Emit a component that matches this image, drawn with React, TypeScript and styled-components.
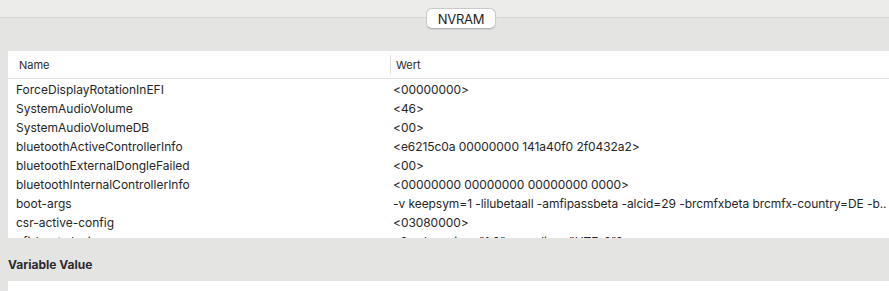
import React from "react";
import styled, { createGlobalStyle } from "styled-components";

const GlobalStyle = createGlobalStyle`
  html, body {
    margin: 0;
    padding: 0;
    background: #e4e4e3;
    overflow: hidden;
  }
  body {
    font-family: Inter, "Liberation Sans", sans-serif;
    color: #262626;
  }
`;

const rows: [string, string][] = [
  ["ForceDisplayRotationInEFI", "<00000000>"],
  ["SystemAudioVolume", "<46>"],
  ["SystemAudioVolumeDB", "<00>"],
  ["bluetoothActiveControllerInfo", "<e6215c0a 00000000 141a40f0 2f0432a2>"],
  ["bluetoothExternalDongleFailed", "<00>"],
  ["bluetoothInternalControllerInfo", "<00000000 00000000 00000000 0000>"],
  [
    "boot-args",
    "-v keepsym=1 -lilubetaall -amfipassbeta -alcid=29 -brcmfxbeta brcmfx-country=DE -b..",
  ],
  ["csr-active-config", "<03080000>"],
  ["efi-boot-device", "<?xml version=\"1.0\" encoding=\"UTF-8\"?><array>"],
];

export default function App() {
  return (
    <Page>
      <GlobalStyle />
      <TopBar />
      <TabStrip>
        <Tab>NVRAM</Tab>
      </TabStrip>
      <TablePanel>
        <HeaderRow>
          <HeaderCell>Name</HeaderCell>
          <HeaderCell divided>Wert</HeaderCell>
        </HeaderRow>
        {rows.map(([name, value]) => (
          <Row key={name}>
            <Cell>{name}</Cell>
            <Cell value>{value}</Cell>
          </Row>
        ))}
      </TablePanel>
      <SectionTitle>Variable Value</SectionTitle>
      <ValueBox />
    </Page>
  );
}

const Page = styled.div`
  height: 291px;
  display: flex;
  flex-direction: column;
`;

const TopBar = styled.div`
  height: 17px;
  background: #ececeb;
  border-bottom: 1px solid #d5d5d4;
  flex-shrink: 0;
`;

const TabStrip = styled.div`
  display: flex;
  justify-content: center;
  margin-top: -10px;
  padding-left: 33px;
`;

const Tab = styled.div`
  width: 68px;
  height: 19px;
  box-sizing: content-box;
  display: flex;
  align-items: center;
  justify-content: center;
  background: #ffffff;
  border: 1px solid #c9c9c9;
  border-bottom-color: #b5b5b5;
  border-radius: 6px;
  font-size: 13px;
  letter-spacing: -0.3px;
  color: #1e1e1e;
  box-shadow: 0 0.5px 1px rgba(0, 0, 0, 0.08);
`;

const TablePanel = styled.div`
  margin: 22px 0 0 8px;
  height: 187px;
  background: #ffffff;
  overflow: hidden;
  flex-shrink: 0;
`;

const HeaderRow = styled.div`
  display: grid;
  grid-template-columns: 382px 1fr;
  height: 27px;
  align-items: center;
  border-bottom: 1px solid #e2e2e2;
  font-size: 11px;
`;

const HeaderCell = styled.div<{ divided?: boolean }>`
  padding-left: ${(p) => (p.divided ? "5px" : "11px")};
  padding-top: 2px;
  border-left: ${(p) => (p.divided ? "1px solid #e0e0e0" : "none")};
  line-height: 17px;
  color: #2a2a2a;
`;

const Row = styled.div`
  display: grid;
  grid-template-columns: 382px 1fr;
  height: 19px;
  align-items: center;
  font-size: 12px;
`;

const Cell = styled.div<{ value?: boolean }>`
  padding-left: ${(p) => (p.value ? "3px" : "8px")};
  padding-top: 1px;
  white-space: nowrap;
  overflow: hidden;
  letter-spacing: ${(p) => (p.value ? "-0.06px" : "0")};
  color: #262626;
`;

const SectionTitle = styled.div`
  margin: 19px 0 0 8px;
  font-size: 12px;
  font-weight: 700;
  color: #2b2b2b;
  line-height: 16px;
`;

const ValueBox = styled.div`
  margin: 8px 0 0 8px;
  flex: 1;
  background: #ffffff;
`;
